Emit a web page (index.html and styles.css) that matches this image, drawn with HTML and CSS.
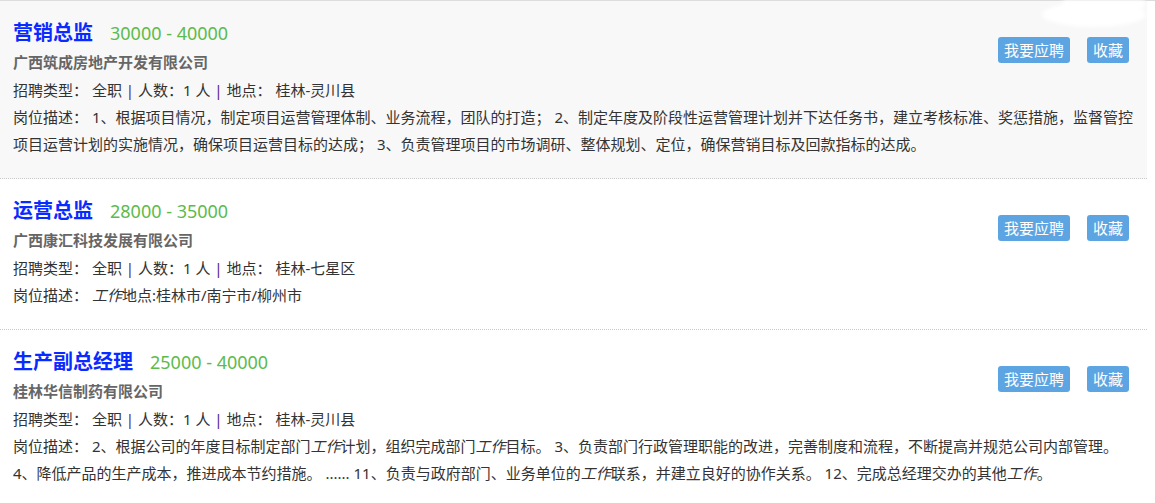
FILE: index.html
```html
<!DOCTYPE html>
<html lang="zh-CN">
<head>
<meta charset="utf-8">
<title>职位列表</title>
<link rel="stylesheet" href="styles.css">
</head>
<body>
<div class="page">
  <div class="redact"></div>
  <ul class="jobs">
    <li class="job job-active">
      <div class="job-title"><span class="name">营销总监</span><span class="salary">30000 - 40000</span></div>
      <div class="company">广西筑成房地产开发有限公司</div>
      <div class="meta">招聘类型： 全职 <span class="sep">|</span> 人数：1 人 <span class="sep">|</span> 地点： 桂林-灵川县</div>
      <div class="actions"><a class="btn">我要应聘</a><a class="btn">收藏</a></div>
      <p class="desc">岗位描述： 1、根据项目情况，制定项目运营管理体制、业务流程，团队的打造； 2、制定年度及阶段性运营管理计划并下达任务书，建立考核标准、奖惩措施，监督管控项目运营计划的实施情况，确保项目运营目标的达成； 3、负责管理项目的市场调研、整体规划、定位，确保营销目标及回款指标的达成。</p>
    </li>
    <li class="job">
      <div class="job-title"><span class="name">运营总监</span><span class="salary">28000 - 35000</span></div>
      <div class="company">广西康汇科技发展有限公司</div>
      <div class="meta">招聘类型： 全职 <span class="sep">|</span> 人数：1 人 <span class="sep">|</span> 地点： 桂林-七星区</div>
      <div class="actions"><a class="btn">我要应聘</a><a class="btn">收藏</a></div>
      <p class="desc">岗位描述： <em>工作</em>地点:桂林市/南宁市/柳州市</p>
    </li>
    <li class="job">
      <div class="job-title"><span class="name">生产副总经理</span><span class="salary">25000 - 40000</span></div>
      <div class="company">桂林华信制药有限公司</div>
      <div class="meta">招聘类型： 全职 <span class="sep">|</span> 人数：1 人 <span class="sep">|</span> 地点： 桂林-灵川县</div>
      <div class="actions"><a class="btn">我要应聘</a><a class="btn">收藏</a></div>
      <p class="desc">岗位描述： 2、根据公司的年度目标制定部门<em>工作</em>计划，组织完成部门<em>工作</em>目标。 3、负责部门行政管理职能的改进，完善制度和流程，不断提高并规范公司内部管理。 4、降低产品的生产成本，推进成本节约措施。 ...... 11、负责与政府部门、业务单位的<em>工作</em>联系，并建立良好的协作关系。 12、完成总经理交办的其他<em>工作</em>。</p>
    </li>
  </ul>
</div>
</body>
</html>
```

FILE: styles.css
```css
html, body {
  margin: 0;
  padding: 0;
  background: #fff;
}

body {
  font-family: "Noto Sans", "Noto Sans CJK SC", sans-serif;
  font-size: 15px;
  color: #333;
}

.page {
  position: relative;
  border-top: 1px solid #dcdcdc;
}

.redact {
  position: absolute;
  left: 1042px;
  top: 1px;
  width: 104px;
  height: 25px;
  background: #fff;
  border-radius: 50%;
  filter: blur(2px);
  z-index: 2;
}

.redact::before {
  content: "";
  position: absolute;
  left: 21px;
  top: -2px;
  width: 82px;
  height: 8px;
  background: #fff;
}

.jobs {
  list-style: none;
  margin: 0;
  padding: 0;
  width: 1147px;
}

.job {
  display: grid;
  grid-template-columns: 1fr auto;
  grid-template-rows: 30px 28px 28px auto;
  padding: 17px 8px 20px 13px;
  border-bottom: 1px dotted #c8c8c8;
}

.job-active {
  background: #f8f8f8;
}

.job-title {
  grid-column: 1;
  grid-row: 1;
  line-height: 30px;
  white-space: nowrap;
}

.name {
  font-size: 20px;
  font-weight: bold;
  color: #0a2bff;
}

.salary {
  font-size: 18px;
  color: #5cbb4c;
  margin-left: 17px;
}

.company {
  grid-column: 1;
  grid-row: 2;
  line-height: 28px;
  font-weight: bold;
  color: #666;
}

.meta {
  grid-column: 1;
  grid-row: 3;
  line-height: 28px;
  color: #333;
}

.sep {
  color: #551a8b;
}

.actions {
  grid-column: 2;
  grid-row: 1 / 4;
  align-self: start;
  display: flex;
  gap: 17px;
  margin-top: 19px;
  margin-right: 10px;
}

.btn {
  display: block;
  background: #5da5e2;
  color: #fff;
  font-size: 15px;
  line-height: 26px;
  height: 26px;
  padding: 0 6px;
  border-radius: 3px;
}

.desc {
  grid-column: 1 / 3;
  grid-row: 4;
  margin: 0;
  line-height: 27px;
  color: #333;
}

.desc em {
  font-style: italic;
}
```
